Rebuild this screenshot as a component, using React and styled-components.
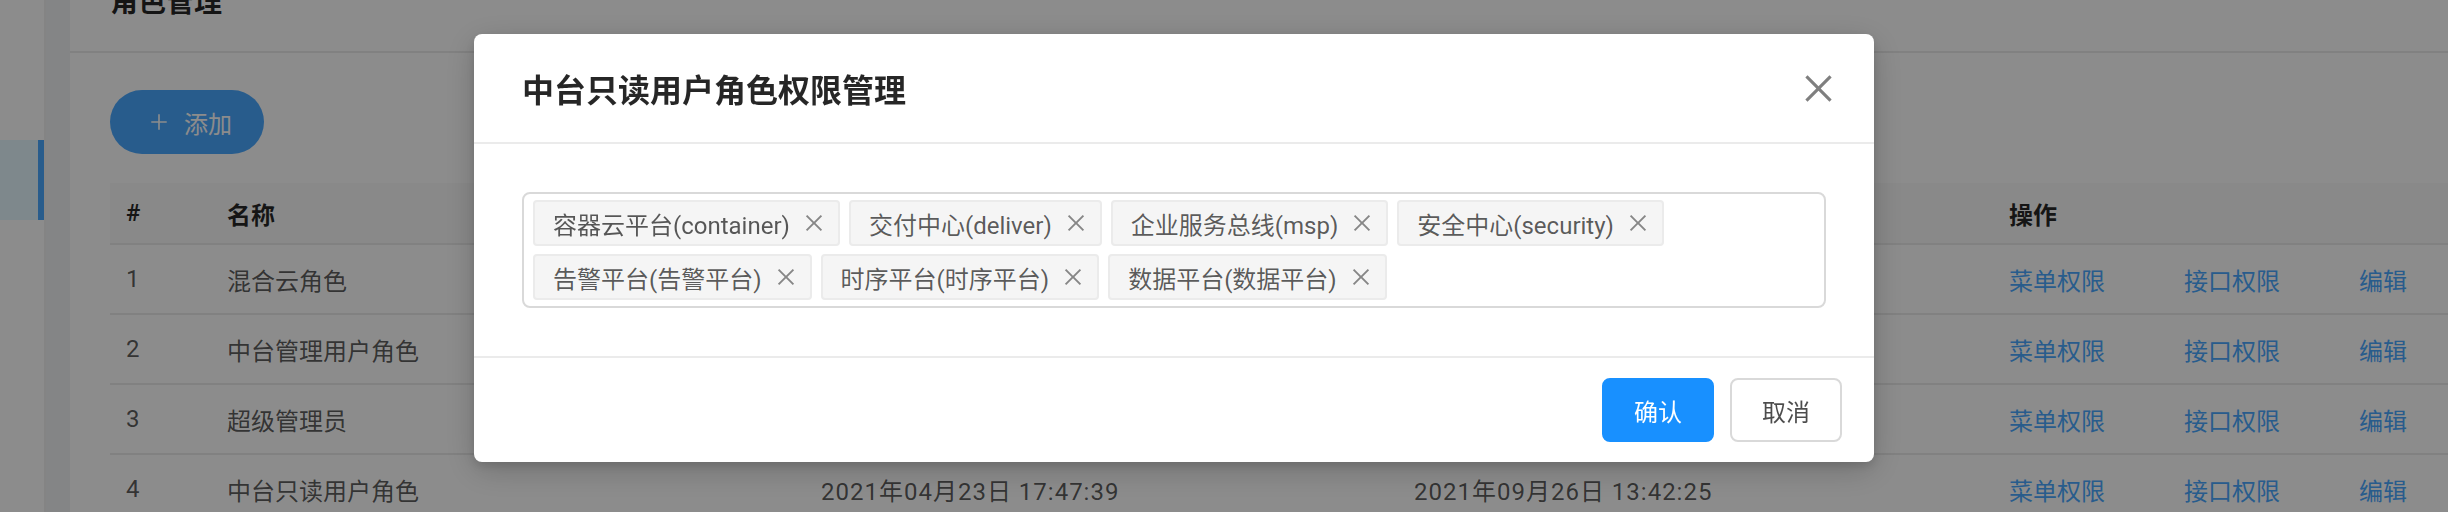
import React from 'react';
import styled, { createGlobalStyle } from 'styled-components';
import { AiOutlineClose, AiOutlinePlus } from 'react-icons/ai';

const GlobalStyle = createGlobalStyle`
html, body {
  margin: 0;
  padding: 0;
}
body {
  width: 2448px;
  height: 512px;
  overflow: hidden;
  background: #f0f2f5;
  font-family: Roboto, "Noto Sans CJK SC", sans-serif;
  color: rgba(0, 0, 0, 0.65);
}
`;

const Page = styled.div`
display: flex;
height: 512px;
overflow: hidden;
`;

const Sider = styled.div`
width: 44px;
background: #fff;
border-right: 2px solid #f0f0f0;
padding-top: 140px;
`;

const MenuItem = styled.div`
height: 80px;
background: ${p => (p.active ? '#e6f7ff' : 'transparent')};
border-right: 6px solid ${p => (p.active ? '#4aa8ff' : 'transparent')};
`;

const Main = styled.div`
flex: 1;
margin-left: 24px;
background: #fff;
display: flex;
flex-direction: column;
`;

const PageHeader = styled.div`
height: 17px;
padding: 0 0 34px 40px;
border-bottom: 2px solid #ebebeb;
display: flex;
align-items: flex-end;
h2 {
  margin: 0;
  font-size: 28px;
  line-height: 28px;
  font-weight: 600;
  color: rgba(0, 0, 0, 0.85);
  white-space: nowrap;
}
`;

const Content = styled.div`
padding: 37px 0 0 40px;
`;

const AddButton = styled.button`
display: flex;
align-items: center;
gap: 14px;
height: 64px;
padding: 0 32px 0 38px;
border: none;
border-radius: 32px;
background: #4aa8ff;
color: #fff;
font: inherit;
font-size: 24px;
margin-bottom: 29px;
`;

const Row = styled.div`
display: grid;
grid-template-columns: 101px 594px 593px 595px 1fr;
align-items: center;
height: ${p => (p.head ? '60px' : '68px')};
background: ${p => (p.head ? '#fafafa' : '#fff')};
border-bottom: 2px solid #ebebeb;
font-size: 24px;
font-weight: ${p => (p.head ? 600 : 400)};
color: ${p => (p.head ? 'rgba(0, 0, 0, 0.85)' : 'rgba(0, 0, 0, 0.65)')};
`;

const Cell = styled.div`
padding: 0 16px;
white-space: nowrap;
letter-spacing: ${p => (p.date ? '1px' : 'normal')};
`;

const Actions = styled.div`
display: flex;
gap: 79px;
padding: 0 16px;
`;

const Link = styled.a`
color: #4aa8ff;
white-space: nowrap;
`;

const Mask = styled.div`
position: fixed;
inset: 0;
background: rgba(0, 0, 0, 0.45);
`;

const ModalWrap = styled.div`
position: fixed;
inset: 0;
padding: 34px 0 0 474px;
`;

const Modal = styled.div`
position: relative;
width: 1400px;
background: #fff;
border-radius: 8px;
box-shadow: 0 8px 32px rgba(0, 0, 0, 0.2), 0 4px 10px rgba(0, 0, 0, 0.12);
`;

const ModalHeader = styled.div`
height: 108px;
padding: 0 48px;
display: flex;
align-items: center;
border-bottom: 2px solid #ebebeb;
font-size: 32px;
font-weight: 600;
color: rgba(0, 0, 0, 0.85);
`;

const Close = styled.button`
position: absolute;
top: 0;
right: 0;
width: 112px;
height: 108px;
display: flex;
align-items: center;
justify-content: center;
background: transparent;
border: none;
color: rgba(0, 0, 0, 0.5);
padding: 0;
`;

const ModalBody = styled.div`
padding: 48px;
`;

const Select = styled.div`
border: 2px solid #d9d9d9;
border-radius: 8px;
padding: 6px 9px;
display: flex;
flex-wrap: wrap;
gap: 8px 9px;
`;

const Tag = styled.div`
display: flex;
align-items: center;
height: 42px;
padding: 0 12px 0 18px;
gap: 12px;
background: #f5f5f5;
border: 2px solid #ebebeb;
border-radius: 4px;
font-size: 24px;
color: rgba(0, 0, 0, 0.65);
white-space: nowrap;
svg {
  color: rgba(0, 0, 0, 0.45);
}
`;

const ModalFooter = styled.div`
border-top: 2px solid #ebebeb;
padding: 20px 32px;
display: flex;
justify-content: flex-end;
gap: 16px;
`;

const Button = styled.button`
height: 64px;
padding: 0 30px;
border-radius: 8px;
font: inherit;
font-size: 24px;
border: 2px solid ${p => (p.primary ? '#1890ff' : '#d9d9d9')};
background: ${p => (p.primary ? '#1890ff' : '#fff')};
color: ${p => (p.primary ? '#fff' : 'rgba(0, 0, 0, 0.7)')};
`;

const roles = [
  { id: 1, name: '混合云角色', created: '2021年03月12日 10:21:08', updated: '2021年09月26日 13:40:11' },
  { id: 2, name: '中台管理用户角色', created: '2021年04月23日 17:46:02', updated: '2021年09月26日 13:41:37' },
  { id: 3, name: '超级管理员', created: '2021年01月05日 09:12:44', updated: '2021年09月26日 13:41:59' },
  { id: 4, name: '中台只读用户角色', created: '2021年04月23日 17:47:39', updated: '2021年09月26日 13:42:25' },
];

const tags = [
  '容器云平台(container)',
  '交付中心(deliver)',
  '企业服务总线(msp)',
  '安全中心(security)',
  '告警平台(告警平台)',
  '时序平台(时序平台)',
  '数据平台(数据平台)',
];

export default function App() {
  return (
    <>
      <GlobalStyle />
      <Page>
        <Sider>
          <MenuItem active />
        </Sider>
        <Main>
          <PageHeader>
            <h2>角色管理</h2>
          </PageHeader>
          <Content>
            <AddButton>
              <AiOutlinePlus size={22} />
              添加
            </AddButton>
            <Row head>
              <Cell>#</Cell>
              <Cell>名称</Cell>
              <Cell>创建时间</Cell>
              <Cell>更新时间</Cell>
              <Cell>操作</Cell>
            </Row>
            {roles.map(r => (
              <Row key={r.id}>
                <Cell>{r.id}</Cell>
                <Cell>{r.name}</Cell>
                <Cell date>{r.created}</Cell>
                <Cell date>{r.updated}</Cell>
                <Actions>
                  <Link>菜单权限</Link>
                  <Link>接口权限</Link>
                  <Link>编辑</Link>
                </Actions>
              </Row>
            ))}
          </Content>
        </Main>
      </Page>

      <Mask />
      <ModalWrap>
        <Modal>
          <ModalHeader>中台只读用户角色权限管理</ModalHeader>
          <Close>
            <AiOutlineClose size={39} />
          </Close>
          <ModalBody>
            <Select>
              {tags.map(t => (
                <Tag key={t}>
                  {t}
                  <AiOutlineClose size={24} />
                </Tag>
              ))}
            </Select>
          </ModalBody>
          <ModalFooter>
            <Button primary>确认</Button>
            <Button>取消</Button>
          </ModalFooter>
        </Modal>
      </ModalWrap>
    </>
  );
}
